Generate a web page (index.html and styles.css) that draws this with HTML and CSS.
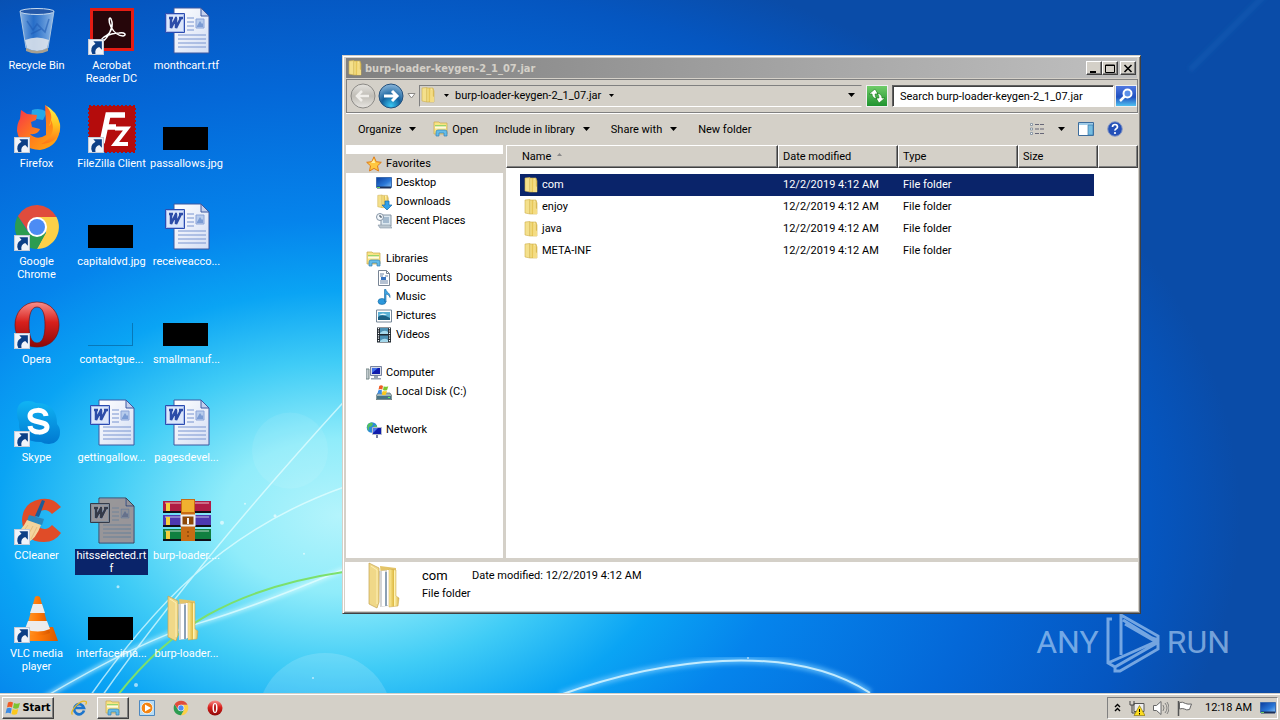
FILE: index.html
```html
<!DOCTYPE html>
<html lang="en">
<head>
  <meta charset="UTF-8">
  <title>Desktop</title>
  <link rel="stylesheet" href="styles.css">
</head>
<body>

  <!-- shared icons -->
  <svg class="sprite" aria-hidden="true">
    <defs>
      <linearGradient id="gFolder" x1="0" x2="1"><stop offset="0" stop-color="#fff0a0"/><stop offset=".45" stop-color="#e0bc48"/><stop offset=".55" stop-color="#fff3b0"/><stop offset="1" stop-color="#d9b548"/></linearGradient>
      <linearGradient id="gRed" x1="0" y1="0" x2="0" y2="1"><stop offset="0" stop-color="#f8908c"/><stop offset=".45" stop-color="#d8201c"/><stop offset="1" stop-color="#8c0808"/></linearGradient>
      <linearGradient id="gFire" x1="0" y1="0" x2="1" y2="1"><stop offset="0" stop-color="#f52c50"/><stop offset=".5" stop-color="#ff7a1c"/><stop offset="1" stop-color="#ffb010"/></linearGradient>
      <linearGradient id="gFlame" x1="0" y1="0" x2="0" y2="1"><stop offset="0" stop-color="#fff04c"/><stop offset=".5" stop-color="#ffc420"/><stop offset="1" stop-color="#ff7418"/></linearGradient>
      <linearGradient id="gScreen" x1="0" y1="0" x2="1" y2="1"><stop offset="0" stop-color="#0a3c9c"/><stop offset=".6" stop-color="#2a78d8"/><stop offset="1" stop-color="#8cc4f4"/></linearGradient>
      <linearGradient id="gPage" x1="0" y1="0" x2="1" y2="1"><stop offset="0" stop-color="#fff"/><stop offset="1" stop-color="#d4def4"/></linearGradient>
      <linearGradient id="gGlass" x1="0" x2="1"><stop offset="0" stop-color="#b8d4f0" stop-opacity=".75"/><stop offset=".4" stop-color="#4a86d0" stop-opacity=".5"/><stop offset="1" stop-color="#c4def6" stop-opacity=".75"/></linearGradient>
      <linearGradient id="gSkype" x1="0" y1="0" x2="0" y2="1"><stop offset="0" stop-color="#10b4f4"/><stop offset="1" stop-color="#0078d0"/></linearGradient>
      <linearGradient id="gCone" x1="0" x2="1"><stop offset="0" stop-color="#ffa030"/><stop offset=".5" stop-color="#ff7a08"/><stop offset="1" stop-color="#d85800"/></linearGradient>
      <radialGradient id="gForward" cx=".5" cy=".9" r=".9"><stop offset="0" stop-color="#38c8f4"/><stop offset=".45" stop-color="#14609c"/><stop offset="1" stop-color="#8cb8dc"/></radialGradient>
      <linearGradient id="gBack" x1="0" y1="0" x2="0" y2="1"><stop offset="0" stop-color="#e4e2de"/><stop offset=".5" stop-color="#c0bdb6"/><stop offset="1" stop-color="#e8e6e2"/></linearGradient>
    </defs>

    <symbol id="folder" viewBox="0 0 16 16">
      <path d="M2 1l5-.5V15l-5-1z" fill="#f4e08c" stroke="#cfae4c" stroke-width=".6"/>
      <path d="M7 1h6l1 3v11H7z" fill="url(#gFolder)" stroke="#cfae4c" stroke-width=".6"/>
      <path d="M11 3h1.500v6l1.500 1v5h-4z" fill="#f4dc84"/>
    </symbol>
    <symbol id="bigfolder" viewBox="0 0 48 48">
      <path d="M16 4l16 2v34l-12 4z" fill="#e4c468"/>
      <path d="M15 9l9-1v36l-8 1z" fill="#d4d4d4"/>
      <path d="M18 9h3v35h-3zM23 8h2v35h-2z" fill="#fff"/>
      <path d="M21 10h2v34h-2z" fill="#8ca0b4"/>
      <path d="M25 7l7 1v26l3 2-1 8-9 1z" fill="url(#gFolder)" stroke="#c8a44c" stroke-width=".5"/>
      <path d="M5 1l10 5v34l-2 6-8-4z" fill="#f0d888" stroke="#c4a450" stroke-width=".7"/>
      <path d="M7 4l6 4v34" fill="none" stroke="#fff0b4"/>
    </symbol>
    <symbol id="library" viewBox="0 0 16 16">
      <path d="M1 1h5l1 1h7v11H1z" fill="#f8e484" stroke="#c8a848" stroke-width=".7"/>
      <path d="M2 4h11v1.500H2z" fill="#98d46c"/><path d="M2 5.500h11v2H2z" fill="#fffbe0"/>
      <path d="M3 15v-4q0-2 2-2h7q2 0 2 2v4h-3v-3H6v3z" fill="#64bce8" stroke="#3480b4" stroke-width=".7"/>
    </symbol>
    <symbol id="star" viewBox="0 0 16 16"><path d="M8 .8l2.200 4.900 5.100.6-3.800 3.500 1 5.200L8 12.400 3.500 15l1-5.200L.7 6.300l5.100-.6z" fill="#ffc840" stroke="#e07c18"/><path d="M8 3l1.200 4H5z" fill="#fff0a0"/></symbol>
    <symbol id="screen" viewBox="0 0 16 14"><path d="M.5 1.500h15v10H.5z" fill="url(#gScreen)" stroke="#3c6cb0"/><path d="M1 10.500h14v2H1z" fill="#1c3058"/><path d="M1 11h3v1H1z" fill="#70d060"/></symbol>
    <symbol id="download" viewBox="0 0 16 16"><use href="#folder" width="14" height="15"/><path d="M9 7h4v4h3l-5 5-5-5h3z" fill="#30a0e8" stroke="#1468ac" stroke-width=".7"/></symbol>
    <symbol id="recent" viewBox="0 0 16 16"><path d="M5 2h10v11H5z" fill="#dce8f0" stroke="#8494a4"/><path d="M7 5h6M7 7h6M7 9h6" stroke="#6c8cac"/><path d="M2 12h12l2 3H4z" fill="#bcc8d0" stroke="#8494a4" stroke-width=".6"/><circle cx="4" cy="4" r="3.500" fill="#f4f8fc" stroke="#8494a4"/><path d="M4 2v2h2" fill="none" stroke="#345"/></symbol>
    <symbol id="document" viewBox="0 0 16 16"><path d="M2.500.5h8l3 3v12h-11z" fill="#fff" stroke="#788494"/><path d="M10.500.5v3h3" fill="none" stroke="#788494"/><path d="M4 4h4M4 6h3M9 6h3M4 11h8M4 13h8" stroke="#6c84a4"/><path d="M5 7h5v3H5z" fill="#3874c0"/></symbol>
    <symbol id="music" viewBox="0 0 16 16"><ellipse cx="6" cy="12.500" rx="4" ry="3" fill="#2c98dc" stroke="#1464a0" stroke-width=".6"/><path d="M8.500 12.500V.5h1.500c0 3 4.500 3 4 8-.8-2.200-2-3-4-3.500v8z" fill="#3ca4e4" stroke="#1464a0" stroke-width=".6"/></symbol>
    <symbol id="picture" viewBox="0 0 16 14"><path d="M.5 1h15v12H.5z" fill="#fff" stroke="#789"/><path d="M2 3h12v8H2z" fill="#5cb0d4"/><path d="M2 8q4-4 12 1v2H2z" fill="#1c6084"/><path d="M3 6q4-3 8 0z" fill="#dff4fc"/></symbol>
    <symbol id="video" viewBox="0 0 16 16"><path d="M1 .5h14v15H1z" fill="#202830"/><path d="M4 1h8v6H4zM4 8.500h8V15H4z" fill="#4c90b4"/><path d="M4 6q4-4 8-1v2H4zM4 14q4-4 8-1v2H4z" fill="#a4d8ec"/><path d="M2.500 1v14M13.500 1v14" stroke="#fff" stroke-width="1.200" stroke-dasharray="1.200 1.200"/></symbol>
    <symbol id="computer" viewBox="0 0 16 16"><path d="M0 4h3v10H0z" fill="#c4ccd0" stroke="#788"/><path d="M4.500 1.500h11v9h-11z" fill="#d8dce8" stroke="#7884a0"/><path d="M6 3h8v6H6z" fill="#101cac"/><path d="M6 3h6L6 8z" fill="#4070e8"/><path d="M8 11h4v2h3v1.500H5V13h3z" fill="#98a4b4"/></symbol>
    <symbol id="winflag" viewBox="0 0 16 16">
      <path d="M3 2.500Q5.500 1 8 2.500L7 7.500Q4.500 6 2 7.500z" fill="#f05c24"/><path d="M9 3q2.500 1.500 6 0l-1.500 5Q11 9.500 8 8z" fill="#7cc430"/>
      <path d="M1.700 8.500Q4 7 6.700 8.500l-1 5Q3 12 .5 13.500z" fill="#3c8ce4"/><path d="M7.700 9q2.500 1.500 5.500 0L12 14Q9 15.500 6.500 14z" fill="#fcc81c"/>
    </symbol>
    <symbol id="disk" viewBox="0 0 16 16"><path d="M2 9h12l2 3v3.500H0V12z" fill="#a0b4b8" stroke="#54686c" stroke-width=".7"/><path d="M1 12h14v3H1z" fill="#487484"/><path d="M12 13h2v1h-2z" fill="#60f060"/><use href="#winflag" x="1" width="12" height="12"/></symbol>
    <symbol id="network" viewBox="0 0 16 16"><circle cx="6" cy="5.500" r="5.300" fill="#2c8cd8"/><path d="M2 2q4-3 5 0-1 3-4 3v4Q0 6 2 2zM8 4l3-1v4H8z" fill="#54c060"/><path d="M6.500 5.500h9v7h-9z" fill="#101cac" stroke="#b4bccc"/><path d="M10 13h2v3h-2z" fill="#7880a0"/><path d="M7 6h5l-5 5z" fill="#4c78e8"/></symbol>
    <symbol id="chrome" viewBox="0 0 48 48">
      <path d="M24 14h19.500A22 22 0 0 1 24 46l9-17z" fill="#fcd048"/><path d="M15 29L4.900 13a22 22 0 0 0 19 33l9-16z" fill="#2c9c50"/>
      <path d="M4.900 13A22 22 0 0 1 43.500 14H24l-9 14z" fill="#e04c3c"/>
      <circle cx="24" cy="24" r="10" fill="#fff"/><circle cx="24" cy="24" r="8" fill="#4c8cf4"/>
    </symbol>
    <symbol id="opera" viewBox="0 0 48 48"><path fill-rule="evenodd" d="M24 1C10 1 2 12 2 24s8 22 22 22 22-10 22-22S38 1 24 1zm0 5c6 0 8 8 8 18s-2 18-8 18-8-8-8-18 2-18 8-18z" fill="url(#gRed)" stroke="#7c1010" stroke-width=".7"/></symbol>
    <symbol id="word" viewBox="0 0 48 48">
      <path d="M11 1h27l8 8v37H11z" fill="url(#gPage)" stroke="#3c58a0"/><path d="M38 1v8h8z" fill="#c4d0ec" stroke="#3c58a0"/>
      <path d="M24 11h7M24 15h7M24 19h7M24 23h7M15 28h28M15 32h28M15 36h28M15 40h28" stroke="#7894d0"/>
      <path d="M33 12h8v9h-8z" fill="#b8ccec" stroke="#8ca4d8"/><path d="M34 19l3-5 2 3 1-1v4h-6z" fill="#7c9cd4"/>
      <path d="M2.500 6.500h19v19h-19z" fill="#a8bcec" stroke="#2c4cb0"/><path d="M4 8h16v16H4z" fill="#dce6fa"/>
      <path d="M6 11h4M12 11h2M16 11h4M8 11v10l5-10v10l5-10" fill="none" stroke="#2c4ca8" stroke-width="2.500"/>
    </symbol>
    <symbol id="shortcut" viewBox="0 0 15 15"><path d="M.5.5h14v14H.5z" fill="#f0f4fa" stroke="#c4ccd8"/><path d="M5 2h8v8l-2.500-2.500Q6 9 7 14H4Q1 8 7 4.500z" fill="#0c3f86"/></symbol>
    <symbol id="down" viewBox="0 0 7 4"><path d="M0 0h7L3.500 4z"/></symbol>
  </svg>

  <div class="screen">
    <svg class="wallpaper" viewBox="0 0 1280 720" preserveAspectRatio="none" aria-hidden="true">
      <defs>
        <radialGradient id="sky" gradientUnits="userSpaceOnUse" cx="0" cy="0" r="1" gradientTransform="translate(340 515) scale(900 590)">
          <stop offset="0" stop-color="#b4f4fc"/><stop offset=".13" stop-color="#90ecfa"/><stop offset=".26" stop-color="#40ccf6"/><stop offset=".38" stop-color="#0aa4f4"/><stop offset=".5" stop-color="#0584ec"/><stop offset=".72" stop-color="#0468d8"/><stop offset=".9" stop-color="#0556c0"/><stop offset="1" stop-color="#0a4ca8"/>
        </radialGradient>
        <filter id="soft"><feGaussianBlur stdDeviation="2"/></filter>
      </defs>
      <rect width="1280" height="720" fill="url(#sky)"/>
      <path d="M1190 70L1280 -20" stroke="#3c80cc" stroke-opacity=".2" stroke-width="5" filter="url(#soft)"/>
      <circle cx="290" cy="450" r="38" fill="#fff" fill-opacity=".08"/>
      <circle cx="325" cy="720" r="68" fill="#fff" fill-opacity=".15"/>
      <path d="M45 696Q140 640 200 622T345 568" fill="none" stroke="#e8ffff" stroke-opacity=".6" stroke-width="4" filter="url(#soft)"/>
      <path d="M45 696Q140 640 200 622T345 568M88 698C150 610 220 530 345 486M100 698Q190 570 345 400" fill="none" stroke="#e8ffff" stroke-opacity=".7" stroke-width="1.500"/>
      <path d="M118 694C170 628 230 588 345 571" fill="none" stroke="#7ce06c" stroke-width="2"/>
      <path d="M560 694C660 658 790 640 870 692" fill="none" stroke="#70c8ff" stroke-opacity=".7" stroke-width="7" filter="url(#soft)"/>
      <path d="M560 694C660 658 790 640 870 692" fill="none" stroke="#d8f6ff" stroke-opacity=".85" stroke-width="2"/>
      <g fill="#fff" fill-opacity=".6"><circle cx="222" cy="522" r="2"/><circle cx="275" cy="515" r="1.500"/><circle cx="245" cy="503" r="1"/><circle cx="118" cy="586" r="1.500"/><circle cx="304" cy="553" r="1"/><circle cx="136" cy="684" r="2"/><circle cx="313" cy="677" r="1"/><circle cx="748" cy="657" r="1"/></g>
    </svg>

    <main class="desktop">
      <ul class="icons">
        <li class="item"><svg class="pic" viewBox="0 0 48 48"><path d="M7 4l6 37q11 7 22 0l6-37z" fill="url(#gGlass)" stroke="#a8c4e0"/><path d="M12 33q12-5 24 0l-2 8q-10 6-20 0z" fill="#e4e8ec" fill-opacity=".85"/><path d="M13 41q11 6 22 0v3q-11 5-22 0z" fill="#a8a090"/><ellipse cx="24" cy="4.500" rx="17" ry="3" fill="#2458a8" stroke="#c8dcf0"/><path d="M14 14l6 9 4-6 8 8 4-13M18 27l10-5" fill="none" stroke="#205cb4" stroke-width="1.500" stroke-opacity=".6"/></svg><span class="label">Recycle Bin</span></li>
        <li class="item"><svg class="pic" viewBox="0 0 48 48"><path d="M2 1h44v43H2z" fill="#e41c14"/><path d="M5 4h38v37H5z" fill="#26060a"/><path d="M16 30c7-3 10-11 7-18-2-3-3 2 0 8 4 7 8 9 12 9 4-1 2-4-4-3-6 0-11 2-15 4-3 2-4 6-1 4 5-3 9-12 9-17" fill="none" stroke="#fff" stroke-width="1.500"/><use href="#shortcut" y="32" width="16" height="16"/></svg><span class="label">Acrobat<br>Reader DC</span></li>
        <li class="item"><svg class="pic"><use href="#word"/></svg><span class="label">monthcart.rtf</span></li>

        <li class="item"><svg class="pic" viewBox="0 0 48 48"><circle cx="25" cy="22" r="18" fill="#1464d4"/><path d="M19 5q8-3 15 2l-4 8-12-2z" fill="#24a8e8"/><path d="M8 5l6 4 10 1-1 5-5 2 1 5 8 2q-2 6-10 5 7 7 16 1L33 18 32 0q13 9 15 22-1 20-20 23Q7 44 4 26q0-8 3-12z" fill="url(#gFire)"/><path d="M32 0c7 6 8 13 4 21 2-1 2-4 2-6 5 10 0 19-10 24 16-1 20-10 19-20Q44 6 32 0z" fill="url(#gFlame)"/><use href="#shortcut" x="1" y="32" width="16" height="16"/></svg><span class="label">Firefox</span></li>
        <li class="item"><svg class="pic" viewBox="0 0 48 48"><path d="M1 1h46v46H1z" fill="#b40c0c" stroke="#b40c0c" stroke-width="2" stroke-dasharray="2 2"/><path d="M14 38l6-28h17M16 22h12" fill="none" stroke="#fff" stroke-width="5.500"/><path d="M27 23.500h12L27 39h13" fill="none" stroke="#fff" stroke-width="4"/><use href="#shortcut" y="32" width="16" height="16"/></svg><span class="label">FileZilla Client</span></li>
        <li class="item"><span class="pic thumb"></span><span class="label">passallows.jpg</span></li>

        <li class="item"><svg class="pic" viewBox="0 0 48 48"><use href="#chrome" width="48" height="48"/><use href="#shortcut" x="1" y="32" width="16" height="16"/></svg><span class="label">Google<br>Chrome</span></li>
        <li class="item"><span class="pic thumb"></span><span class="label">capitaldvd.jpg</span></li>
        <li class="item"><svg class="pic"><use href="#word"/></svg><span class="label">receiveacco...</span></li>

        <li class="item"><svg class="pic" viewBox="0 0 48 48"><use href="#opera" width="48" height="48"/><use href="#shortcut" x="1" y="32" width="16" height="16"/></svg><span class="label">Opera</span></li>
        <li class="item"><span class="pic thumb clear"></span><span class="label">contactgue...</span></li>
        <li class="item"><span class="pic thumb"></span><span class="label">smallmanuf...</span></li>

        <li class="item"><svg class="pic" viewBox="0 0 48 48"><path d="M4 14Q4 2 15 2q5 0 8 2 21 0 21 21 3 3 3 8 0 11-11 12-5 0-8-2Q5 43 6 23 4 19 4 14z" fill="url(#gSkype)"/><path d="M33 17c-1-8-16-7-16 0 0 8 17 4 17 11 0 7-16 7-17-1" fill="none" stroke="#fff" stroke-width="5"/><use href="#shortcut" x="1" y="32" width="16" height="16"/></svg><span class="label">Skype</span></li>
        <li class="item"><svg class="pic"><use href="#word"/></svg><span class="label">gettingallow...</span></li>
        <li class="item"><svg class="pic"><use href="#word"/></svg><span class="label">pagesdevel...</span></li>

        <li class="item"><svg class="pic" viewBox="0 0 48 48"><path d="M48 10Q40 0 28 2 10 5 9 23q1 22 22 22 11 0 17-9l-9-8q-6 7-13 2-8-8 0-15 7-5 13 2z" fill="#e04c28"/><path d="M29 3l3 1-6 16-4-1z" fill="#1c5c98"/><path d="M16 18l15 4-2 6-15-4z" fill="#2c88bc"/><path d="M14 23l14 5q-5 14-14 18L1 38q8-5 13-15z" fill="#f4d49c"/><path d="M15 28L6 40M20 29l-7 13M24 30l-6 12" stroke="#e4bc80"/><use href="#shortcut" x="1" y="32" width="16" height="16"/></svg><span class="label">CCleaner</span></li>
        <li class="item selected"><svg class="pic"><use href="#word"/></svg><span class="label">hitsselected.rt<br>f</span></li>
        <li class="item"><svg class="pic" viewBox="0 0 48 48"><path d="M0 4h48v12H0z" fill="#b01c44"/><path d="M0 18h48v12H0z" fill="#4c38b0"/><path d="M0 32h48v12H0z" fill="#108040"/><path d="M2 6h44M2 20h44M2 34h44" stroke="#fff" stroke-opacity=".35" stroke-width="2"/><path d="M0 15h48M0 29h48M0 43h48" stroke="#101018" stroke-width="2"/><path d="M3 6h4v8H3zM3 20h4v8H3zM3 34h4v8H3z" fill="#f4d03c"/><path d="M18 2h14v42H18z" fill="#c86c14"/><path d="M19 3h12v12H19z" fill="#f0b030"/><path d="M18.500 18.500h13v10h-13z" fill="#8c4808" stroke="#f0f0f0" stroke-width="2"/><path d="M25 21v6" stroke="#f8f8f8" stroke-width="2"/><path d="M25 34v8" stroke="#6c3404" stroke-dasharray="2 2"/></svg><span class="label">burp-loader....</span></li>

        <li class="item"><svg class="pic" viewBox="0 0 48 48"><path d="M12 32h28l5 14H6z" fill="url(#gCone)"/><path d="M22 2q2-2 5 0l10 36q-12 5-25 0z" fill="url(#gCone)"/><path d="M20 9h9l3 9H17zM15 26h19l3 8q-12 5-25 0z" fill="#ececec"/><use href="#shortcut" x="1" y="32" width="16" height="16"/></svg><span class="label">VLC media<br>player</span></li>
        <li class="item"><span class="pic thumb"></span><span class="label">interfaceima...</span></li>
        <li class="item"><svg class="pic"><use href="#bigfolder"/></svg><span class="label">burp-loader...</span></li>
      </ul>

      <div class="watermark">
        <span>ANY</span>
        <svg viewBox="0 0 56 62"><path d="M7 8H3v44l7 4 42-24M16 44V4l37 21v4l-6-2-29-18M3 52L50 31M10 56v4h5l38-22v-6L20 13" fill="none" stroke="currentColor" stroke-width="3"/></svg>
        <span>RUN</span>
      </div>

      <section class="window">
        <header class="titlebar">
          <svg class="ico"><use href="#folder"/></svg>
          <h1>burp-loader-keygen-2_1_07.jar</h1>
          <div class="controls">
            <button aria-label="Minimize"><svg viewBox="0 0 10 9"><path d="M1 7h6v2H1z"/></svg></button>
            <button aria-label="Maximize"><svg viewBox="0 0 10 9"><path d="M.5 1h9v7.500h-9zM.5 1.500h9" fill="none" stroke="#000"/></svg></button>
            <button class="close" aria-label="Close"><svg viewBox="0 0 10 9"><path d="M1.500 1l7 7M8.500 1l-7 7" stroke="#000" stroke-width="1.600"/></svg></button>
          </div>
        </header>

        <nav class="navbar">
          <button class="round" aria-label="Back"><svg viewBox="0 0 26 26"><circle cx="13" cy="13" r="12" fill="url(#gBack)" stroke="#8c8a86"/><path d="M19 13H8M12 8l-5 5 5 5" fill="none" stroke="#f0eeea" stroke-width="2.500"/></svg></button>
          <button class="round" aria-label="Forward"><svg viewBox="0 0 26 26"><circle cx="13" cy="13" r="12" fill="url(#gForward)" stroke="#24507c"/><path d="M6 13h12M14 8l5 5-5 5" fill="none" stroke="#fff" stroke-width="3"/></svg></button>
          <button class="history" aria-label="Recent pages"><svg viewBox="0 0 9 6"><path d="M1 .5h7L4.500 5z" fill="#fff" stroke="#8c8a86"/></svg></button>
          <div class="address">
            <svg class="ico"><use href="#folder"/></svg>
            <svg class="arrow"><use href="#down"/></svg>
            <span>burp-loader-keygen-2_1_07.jar</span>
            <svg class="arrow"><use href="#down"/></svg>
            <svg class="arrow last"><use href="#down"/></svg>
          </div>
          <button class="square green" aria-label="Refresh"><svg viewBox="0 0 20 20"><path d="M8 3L2 8h3q0 4 5 5-2-2-2-5h3zM12 17l6-5h-3q0-4-5-5 2 2 2 5H9z" fill="#fff" stroke="#187818" stroke-width=".6"/></svg></button>
          <input class="search" type="text" aria-label="Search" placeholder="Search burp-loader-keygen-2_1_07.jar">
          <button class="square blue" aria-label="Go"><svg viewBox="0 0 20 20"><circle cx="11.500" cy="7.500" r="4" fill="#5c90e8" stroke="#fff" stroke-width="2"/><path d="M8.500 10.500L4 15" stroke="#fff" stroke-width="2.500"/></svg></button>
        </nav>

        <div class="toolbar">
          <button>Organize <svg class="arrow"><use href="#down"/></svg></button>
          <button class="open"><svg class="ico"><use href="#library"/></svg>Open</button>
          <button>Include in library <svg class="arrow"><use href="#down"/></svg></button>
          <button>Share with <svg class="arrow"><use href="#down"/></svg></button>
          <button>New folder</button>
          <div class="tools">
            <button aria-label="Change view"><svg class="ico" viewBox="0 0 16 16"><path d="M1.500 2.500h2v2h-2zM1.500 7h2v2h-2zM1.500 11.500h2v2h-2z" fill="#fff" stroke="#789" stroke-width=".8"/><path d="M6 3.500h4M11 3.500h4M6 8h4M11 8h4M6 12.500h4M11 12.500h4" stroke="#667"/></svg><svg class="arrow"><use href="#down"/></svg></button>
            <button aria-label="Preview pane"><svg class="ico" viewBox="0 0 16 16"><path d="M.5 1.500h15v13H.5z" fill="#fff" stroke="#3c6c9c"/><path d="M1 2h14v2H1z" fill="#a0cce8"/><path d="M10 4h5v10h-5z" fill="#74bce0" stroke="#3c7cac" stroke-width=".7"/></svg></button>
            <button aria-label="Help"><svg class="ico" viewBox="0 0 16 16"><circle cx="8" cy="8" r="7.300" fill="#2450b8" stroke="#8c9cc4"/><path d="M5.500 6q0-2.500 2.500-2.500T10.500 6q0 1-1.300 1.800T8 9.700" fill="none" stroke="#fff" stroke-width="1.700"/><circle cx="8" cy="12" r="1.100" fill="#fff"/></svg></button>
          </div>
        </div>

        <div class="panes">
          <aside class="tree">
            <ul>
              <li class="current"><svg class="ico"><use href="#star"/></svg>Favorites</li>
              <li class="sub"><svg class="ico"><use href="#screen"/></svg>Desktop</li>
              <li class="sub"><svg class="ico"><use href="#download"/></svg>Downloads</li>
              <li class="sub"><svg class="ico"><use href="#recent"/></svg>Recent Places</li>
            </ul>
            <ul>
              <li><svg class="ico"><use href="#library"/></svg>Libraries</li>
              <li class="sub"><svg class="ico"><use href="#document"/></svg>Documents</li>
              <li class="sub"><svg class="ico"><use href="#music"/></svg>Music</li>
              <li class="sub"><svg class="ico"><use href="#picture"/></svg>Pictures</li>
              <li class="sub"><svg class="ico"><use href="#video"/></svg>Videos</li>
            </ul>
            <ul>
              <li><svg class="ico"><use href="#computer"/></svg>Computer</li>
              <li class="sub"><svg class="ico"><use href="#disk"/></svg>Local Disk (C:)</li>
            </ul>
            <ul>
              <li><svg class="ico"><use href="#network"/></svg>Network</li>
            </ul>
          </aside>

          <div class="list">
            <table>
              <thead>
                <tr>
                  <th class="col-name">Name <svg class="sort" viewBox="0 0 5 3"><path d="M0 3h5L2.500 0z" fill="#888"/></svg></th>
                  <th class="col-date">Date modified</th>
                  <th class="col-type">Type</th>
                  <th class="col-size">Size</th>
                  <th></th>
                </tr>
              </thead>
              <tbody>
                <tr class="active"><td><svg class="ico"><use href="#folder"/></svg>com</td><td>12/2/2019 4:12 AM</td><td>File folder</td><td></td></tr>
                <tr><td><svg class="ico"><use href="#folder"/></svg>enjoy</td><td>12/2/2019 4:12 AM</td><td>File folder</td><td></td></tr>
                <tr><td><svg class="ico"><use href="#folder"/></svg>java</td><td>12/2/2019 4:12 AM</td><td>File folder</td><td></td></tr>
                <tr><td><svg class="ico"><use href="#folder"/></svg>META-INF</td><td>12/2/2019 4:12 AM</td><td>File folder</td><td></td></tr>
              </tbody>
            </table>
          </div>
        </div>

        <footer class="details">
          <svg class="preview"><use href="#bigfolder"/></svg>
          <div>
            <p><span class="filename">com</span>Date modified: 12/2/2019 4:12 AM</p>
            <p>File folder</p>
          </div>
        </footer>
      </section>
    </main>

    <footer class="taskbar">
      <button class="start"><svg class="flag"><use href="#winflag"/></svg>Start</button>
      <div class="quick">
        <button aria-label="Internet Explorer"><svg class="ico" viewBox="0 0 16 16"><path d="M13 10.500A5 5 0 1 1 13 8H4" fill="none" stroke="#1c74cc" stroke-width="2.700"/><path d="M1.500 14.500C-2 12 9-1 15 1.500c1 .8 0 2.500-.5 3" fill="none" stroke="#e8b820" stroke-width="1.300"/></svg></button>
        <button class="pressed" aria-label="Windows Explorer"><svg class="ico"><use href="#library"/></svg></button>
        <button aria-label="Media Player"><svg class="ico" viewBox="0 0 16 16"><path d="M.5.5h15v15H.5z" fill="#b8dcf4" stroke="#4c88c0"/><circle cx="8" cy="8" r="5.800" fill="#f48410" stroke="#fff" stroke-width=".7"/><path d="M6 4.500l6 3.500-6 3.500z" fill="#fff"/></svg></button>
        <button aria-label="Chrome"><svg class="ico"><use href="#chrome"/></svg></button>
        <button aria-label="Opera"><svg class="ico" viewBox="0 0 16 16"><circle cx="8" cy="8" r="7.500" fill="url(#gRed)"/><ellipse cx="8" cy="8" rx="2.500" ry="5" fill="#fff"/><ellipse cx="8" cy="8" rx="1" ry="4" fill="#b01818"/></svg></button>
      </div>
      <div class="tray">
        <svg class="chevron" viewBox="0 0 7 9"><path d="M1 4l2.500-2.500L6 4M1 8l2.500-2.500L6 8" fill="none" stroke="#000" stroke-width="1.400"/></svg>
        <svg class="ico" viewBox="0 0 16 16"><path d="M5 3.500h10v8H5z" fill="#eee" stroke="#555"/><path d="M1 1v4h4V1M3 5v8h5" fill="none" stroke="#444"/><path d="M10.500 5.500L16 15.500H5z" fill="#fcdc20" stroke="#806c00" stroke-width=".6"/><path d="M10.500 9v3M10.500 13v1.500" stroke="#000"/></svg>
        <svg class="ico" viewBox="0 0 16 16"><path d="M.5 5.500h3L8 1.500v13l-4.500-4h-3z" fill="#fff" stroke="#666"/><path d="M10 5q2 3 0 6M12 3q4 5 0 10M14 2q4 6 0 12" fill="none" stroke="#777" stroke-width=".9"/></svg>
        <svg class="ico flagged" viewBox="0 0 16 16"><path d="M1.500 1v15" stroke="#555" stroke-width="1.500"/><path d="M2.500 2.500q3-1 6 1 2 1 6 .5l-2 5.500q-3 1-5-.5-2-1-5 0z" fill="#fff" stroke="#666"/></svg>
        <time>12:18 AM</time>
        <svg class="ico"><use href="#screen"/></svg>
      </div>
    </footer>
  </div>

</body>
</html>
```
FILE: styles.css
```css
* {
  box-sizing: border-box;
}

body {
  margin: 0;
  font-family: Roboto, "Liberation Sans", sans-serif;
  font-size: 11px;
  line-height: 13px;
  color: #000;
}

ul, p, h1 {
  margin: 0;
  padding: 0;
  list-style: none;
}

button {
  display: flex;
  align-items: center;
  justify-content: center;
  padding: 0;
  border: 0;
  background: none;
  font: inherit;
  color: inherit;
}

svg {
  display: block;
  flex: none;
}

.sprite {
  position: absolute;
  width: 0;
  height: 0;
}

.ico {
  width: 16px;
  height: 16px;
}

.arrow {
  width: 7px;
  height: 4px;
}

.screen {
  position: relative;
  display: flex;
  flex-direction: column;
  min-height: 100vh;
  overflow: hidden;
}

.wallpaper {
  position: absolute;
  width: 100%;
  height: 100%;
}

.desktop {
  position: relative;
  flex: 1;
}

/* desktop icons */
.icons {
  display: grid;
  grid-template-columns: repeat(3, 73px);
  grid-auto-rows: 98px;
  column-gap: 2px;
  padding-top: 7px;
}

.item {
  display: flex;
  flex-direction: column;
  align-items: center;
  gap: 4px;
  color: #fff;
  text-align: center;
  white-space: nowrap;
}

.pic {
  width: 48px;
  height: 48px;
}

.thumb {
  border: solid transparent;
  border-width: 22px 3px 3px 0;
  background: #000;
  background-clip: padding-box;
}

.thumb.clear {
  background: linear-gradient(#0878b8, #0878b8) right bottom / 100% 1px no-repeat padding-box,
    linear-gradient(#0878b8, #0878b8) right bottom / 1px 100% no-repeat padding-box;
}

.selected .pic {
  filter: sepia(1) hue-rotate(185deg) brightness(0.6);
}

.selected .label {
  width: 73px;
  background: #0a246a;
}

.watermark {
  position: absolute;
  right: 50px;
  bottom: 20px;
  display: flex;
  align-items: center;
  gap: 6px;
  color: rgba(190, 220, 250, 0.6);
  font-family: "Liberation Sans Narrow", Roboto, sans-serif;
  font-size: 32px;
  line-height: 62px;
}

.watermark svg {
  width: 56px;
  height: 62px;
}

/* explorer window */
.window {
  position: absolute;
  left: 342px;
  top: 55px;
  display: flex;
  flex-direction: column;
  width: 799px;
  height: 559px;
  padding: 2px;
  background: #d4d0c8;
  border: 1px solid;
  border-color: #d4d0c8 #404040 #404040 #d4d0c8;
  box-shadow: inset 1px 1px #fff, inset -1px -1px #808080;
}

.titlebar {
  display: flex;
  align-items: center;
  gap: 2px;
  height: 20px;
  margin: 0 1px 1px;
  padding: 0 1px;
  background: linear-gradient(90deg, #808080, #c0c0c0);
  color: #d4d0c8;
}

.titlebar h1 {
  flex: 1;
  font-family: "DejaVu Sans Condensed", "DejaVu Sans", sans-serif;
  font-size: 11px;
}

.controls {
  display: flex;
}

.controls button {
  width: 16px;
  height: 14px;
}

.controls .close {
  margin-left: 2px;
}

.controls button, .start, .pressed {
  background: #d4d0c8;
  border: 1px solid;
  border-color: #fff #404040 #404040 #fff;
  box-shadow: inset -1px -1px #808080;
}

.controls svg {
  width: 10px;
  height: 9px;
}

.navbar {
  display: flex;
  align-items: center;
  height: 34px;
  margin-left: 1px;
  padding: 0 0 0 3px;
  border: 1px solid #808080;
  box-shadow: 0 1px #fff;
}

.round svg {
  width: 26px;
  height: 26px;
}

.round + .round {
  margin-left: 2px;
}

.history {
  width: 15px;
}

.history svg {
  width: 9px;
  height: 6px;
}

.address {
  display: flex;
  align-items: center;
  flex: 1;
  height: 22px;
  padding-bottom: 2px;
  border: 1px solid;
  border-color: #808080 #d4d0c8 #fff #808080;
}

.address .arrow {
  width: 5px;
  height: 3px;
  margin: 0 6px 0 8px;
}

.address .last {
  width: 7px;
  height: 4px;
  margin-left: auto;
}

.square {
  width: 22px;
  height: 22px;
  border: 1px solid #f0f0f0;
}

.square svg {
  width: 20px;
  height: 20px;
}

.green {
  margin: 0 4px;
  background: linear-gradient(#70cc68, #209430);
}

.blue {
  margin-left: 1px;
  background: linear-gradient(#5078e0, #2050c0 55%, #50c0f0);
}

.search {
  width: 222px;
  height: 22px;
  padding: 0 7px;
  background: #fff;
  border: 1px solid;
  border-color: #606060 #fff #fff #606060;
  box-shadow: inset 1px 1px #404040;
  font: inherit;
}

.search::placeholder {
  color: #000;
}

.toolbar {
  display: flex;
  align-items: center;
  gap: 21px;
  height: 32px;
  padding: 0 15px 0 13px;
}

.toolbar button {
  gap: 8px;
}

.toolbar .open {
  gap: 3px;
  margin-right: -4px;
  margin-left: -4px;
}

.tools {
  display: flex;
  gap: 13px;
  margin-left: auto;
}

.tools button {
  gap: 13px;
}

.panes {
  display: flex;
  flex: 1;
  min-height: 0;
}

.tree {
  width: 161px;
  padding-top: 9px;
  background: #fff;
  border-left: 1px solid #d4d0c8;
  border-right: 3px solid #d4d0c8;
}

.tree ul {
  margin-bottom: 19px;
}

.tree li {
  display: flex;
  align-items: center;
  gap: 4px;
  height: 19px;
  padding-left: 20px;
}

.tree .sub {
  padding-left: 30px;
}

.tree .current {
  background: #d4d0c8;
}

.list {
  flex: 1;
  background: #fff;
}

table {
  width: 100%;
  table-layout: fixed;
  border-collapse: separate;
  border-spacing: 0;
}

th {
  height: 23px;
  padding: 0 4px;
  background: #d4d0c8;
  border: 1px solid;
  border-color: #fff #404040 #404040 #fff;
  box-shadow: inset -1px -1px #808080;
  font-weight: normal;
  text-align: left;
}

.col-name {
  width: 272px;
  padding-left: 15px;
}

.col-date, .col-type {
  width: 120px;
}

.col-size {
  width: 80px;
}

.sort {
  display: inline-block;
  width: 5px;
  height: 3px;
  margin-left: 3px;
  vertical-align: 4px;
}

tbody::before {
  content: "";
  display: table-row;
  height: 6px;
}

td {
  height: 22px;
  padding: 0 5px;
  background-clip: padding-box;
  line-height: 16px;
}

td:first-child {
  padding-left: 3px;
  border-left: 14px solid transparent;
}

td:last-child {
  border-right: 4px solid transparent;
}

td .ico {
  display: inline-block;
  margin-right: 3px;
  vertical-align: top;
}

.active td {
  background-color: #0a246a;
  color: #fff;
}

.details {
  display: flex;
  gap: 10px;
  height: 53px;
  padding: 0 19px;
  background: #fff;
  border-top: 4px solid #d4d0c8;
}

.preview {
  width: 48px;
  height: 48px;
}

.details div {
  padding-top: 5px;
}

.details p {
  display: flex;
  height: 18px;
  line-height: 18px;
}

.filename {
  width: 50px;
  font-size: 13px;
}

/* taskbar */
.taskbar {
  position: relative;
  display: flex;
  align-items: center;
  height: 28px;
  padding: 0 2px;
  background: #d4d0c8;
  border-top: 1px solid #d4d0c8;
  box-shadow: inset 0 1px #fff;
}

.start {
  gap: 1px;
  width: 52px;
  height: 22px;
  font-family: "DejaVu Sans Condensed", "DejaVu Sans", sans-serif;
  font-weight: bold;
}

.flag {
  width: 16px;
  height: 16px;
}

.quick {
  display: flex;
  gap: 2px;
  margin-left: 9px;
}

.quick button {
  width: 32px;
  height: 22px;
}

.tray {
  display: flex;
  align-items: center;
  gap: 8px;
  height: 22px;
  margin-left: auto;
  padding: 0 1px 0 6px;
  border: 1px solid;
  border-color: #808080 #fff #fff #808080;
}

.chevron {
  width: 7px;
  height: 9px;
}

.flagged {
  margin-right: 4px;
}
```
